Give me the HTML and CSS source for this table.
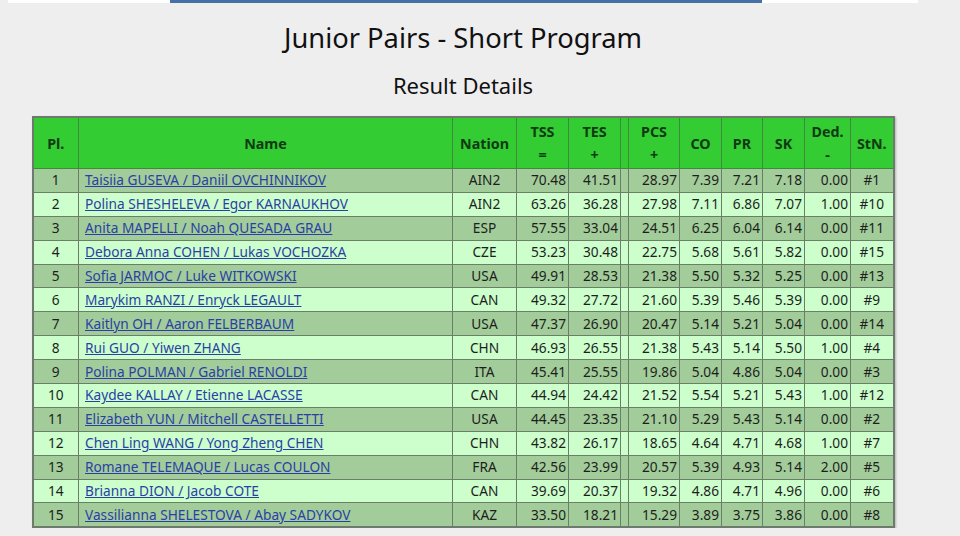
FILE: index.html
```html
<!DOCTYPE html>
<html>
<head>
<meta charset="utf-8">
<link rel="stylesheet" href="styles.css">
</head>
<body>
<div class="topbar"><div class="topbar-blue"></div></div>
<div class="wrap">
  <h1 class="title">Junior Pairs - Short Program</h1>
  <h2 class="subtitle">Result Details</h2>
  <table class="results">
    <colgroup>
      <col class="c-pl"><col class="c-name"><col class="c-nat"><col class="c-tss"><col class="c-tes"><col class="c-gap"><col class="c-pcs"><col class="c-co"><col class="c-pr"><col class="c-sk"><col class="c-ded"><col class="c-stn">
    </colgroup>
    <thead>
      <tr><th>Pl.</th><th>Name</th><th>Nation</th><th>TSS<br>=</th><th>TES<br>+</th><th></th><th>PCS<br>+</th><th>CO</th><th>PR</th><th>SK</th><th>Ded.<br>-</th><th>StN.</th></tr>
    </thead>
    <tbody>
      <tr class="odd"><td class="ctr">1</td><td class="name"><a href="#">Taisiia GUSEVA / Daniil OVCHINNIKOV</a></td><td class="ctr">AIN2</td><td>70.48</td><td>41.51</td><td></td><td>28.97</td><td>7.39</td><td>7.21</td><td>7.18</td><td>0.00</td><td class="ctr">#1</td></tr>
      <tr class="even"><td class="ctr">2</td><td class="name"><a href="#">Polina SHESHELEVA / Egor KARNAUKHOV</a></td><td class="ctr">AIN2</td><td>63.26</td><td>36.28</td><td></td><td>27.98</td><td>7.11</td><td>6.86</td><td>7.07</td><td>1.00</td><td class="ctr">#10</td></tr>
      <tr class="odd"><td class="ctr">3</td><td class="name"><a href="#">Anita MAPELLI / Noah QUESADA GRAU</a></td><td class="ctr">ESP</td><td>57.55</td><td>33.04</td><td></td><td>24.51</td><td>6.25</td><td>6.04</td><td>6.14</td><td>0.00</td><td class="ctr">#11</td></tr>
      <tr class="even"><td class="ctr">4</td><td class="name"><a href="#">Debora Anna COHEN / Lukas VOCHOZKA</a></td><td class="ctr">CZE</td><td>53.23</td><td>30.48</td><td></td><td>22.75</td><td>5.68</td><td>5.61</td><td>5.82</td><td>0.00</td><td class="ctr">#15</td></tr>
      <tr class="odd"><td class="ctr">5</td><td class="name"><a href="#">Sofia JARMOC / Luke WITKOWSKI</a></td><td class="ctr">USA</td><td>49.91</td><td>28.53</td><td></td><td>21.38</td><td>5.50</td><td>5.32</td><td>5.25</td><td>0.00</td><td class="ctr">#13</td></tr>
      <tr class="even"><td class="ctr">6</td><td class="name"><a href="#">Marykim RANZI / Enryck LEGAULT</a></td><td class="ctr">CAN</td><td>49.32</td><td>27.72</td><td></td><td>21.60</td><td>5.39</td><td>5.46</td><td>5.39</td><td>0.00</td><td class="ctr">#9</td></tr>
      <tr class="odd"><td class="ctr">7</td><td class="name"><a href="#">Kaitlyn OH / Aaron FELBERBAUM</a></td><td class="ctr">USA</td><td>47.37</td><td>26.90</td><td></td><td>20.47</td><td>5.14</td><td>5.21</td><td>5.04</td><td>0.00</td><td class="ctr">#14</td></tr>
      <tr class="even"><td class="ctr">8</td><td class="name"><a href="#">Rui GUO / Yiwen ZHANG</a></td><td class="ctr">CHN</td><td>46.93</td><td>26.55</td><td></td><td>21.38</td><td>5.43</td><td>5.14</td><td>5.50</td><td>1.00</td><td class="ctr">#4</td></tr>
      <tr class="odd"><td class="ctr">9</td><td class="name"><a href="#">Polina POLMAN / Gabriel RENOLDI</a></td><td class="ctr">ITA</td><td>45.41</td><td>25.55</td><td></td><td>19.86</td><td>5.04</td><td>4.86</td><td>5.04</td><td>0.00</td><td class="ctr">#3</td></tr>
      <tr class="even"><td class="ctr">10</td><td class="name"><a href="#">Kaydee KALLAY / Etienne LACASSE</a></td><td class="ctr">CAN</td><td>44.94</td><td>24.42</td><td></td><td>21.52</td><td>5.54</td><td>5.21</td><td>5.43</td><td>1.00</td><td class="ctr">#12</td></tr>
      <tr class="odd"><td class="ctr">11</td><td class="name"><a href="#">Elizabeth YUN / Mitchell CASTELLETTI</a></td><td class="ctr">USA</td><td>44.45</td><td>23.35</td><td></td><td>21.10</td><td>5.29</td><td>5.43</td><td>5.14</td><td>0.00</td><td class="ctr">#2</td></tr>
      <tr class="even"><td class="ctr">12</td><td class="name"><a href="#">Chen Ling WANG / Yong Zheng CHEN</a></td><td class="ctr">CHN</td><td>43.82</td><td>26.17</td><td></td><td>18.65</td><td>4.64</td><td>4.71</td><td>4.68</td><td>1.00</td><td class="ctr">#7</td></tr>
      <tr class="odd"><td class="ctr">13</td><td class="name"><a href="#">Romane TELEMAQUE / Lucas COULON</a></td><td class="ctr">FRA</td><td>42.56</td><td>23.99</td><td></td><td>20.57</td><td>5.39</td><td>4.93</td><td>5.14</td><td>2.00</td><td class="ctr">#5</td></tr>
      <tr class="even"><td class="ctr">14</td><td class="name"><a href="#">Brianna DION / Jacob COTE</a></td><td class="ctr">CAN</td><td>39.69</td><td>20.37</td><td></td><td>19.32</td><td>4.86</td><td>4.71</td><td>4.96</td><td>0.00</td><td class="ctr">#6</td></tr>
      <tr class="odd"><td class="ctr">15</td><td class="name"><a href="#">Vassilianna SHELESTOVA / Abay SADYKOV</a></td><td class="ctr">KAZ</td><td>33.50</td><td>18.21</td><td></td><td>15.29</td><td>3.89</td><td>3.75</td><td>3.86</td><td>0.00</td><td class="ctr">#8</td></tr>
    </tbody>
  </table>
</div>
</body>
</html>
```
FILE: styles.css
```css
html, body {
  margin: 0;
  padding: 0;
  background: #eeeeee;
  font-family: "Noto Sans", "Open Sans", sans-serif;
  color: #1e1e1e;
}
.topbar {
  margin-left: 8px;
  width: 910px;
  height: 3px;
  background: #ffffff;
  display: flex;
}
.topbar-blue {
  margin-left: 162px;
  width: 592px;
  height: 3px;
  background: #4670a6;
}
.wrap {
  width: 862px;
  margin-left: 32px;
  display: flex;
  flex-direction: column;
  align-items: center;
}
.title {
  margin: 17px 0 0 0;
  font-size: 27.3px;
  font-weight: normal;
  line-height: 36px;
  color: #111;
}
.subtitle {
  margin: 14px 0 0 0;
  font-size: 22px;
  font-weight: normal;
  line-height: 30px;
  color: #111;
}
.results {
  margin-top: 16px;
  width: 862px;
  border-collapse: collapse;
  table-layout: fixed;
  border: 2px solid #6f7a6f;
  box-shadow: 1px 1px 2px rgba(0,0,0,0.25);
  font-size: 13.7px;
}
.c-pl { width: 46px; }
.c-name { width: 374px; }
.c-nat { width: 64px; }
.c-tss { width: 52px; }
.c-tes { width: 52px; }
.c-gap { width: 8px; }
.c-pcs { width: 51px; }
.c-co { width: 42px; }
.c-pr { width: 41px; }
.c-sk { width: 42px; }
.c-ded { width: 46px; }
.c-stn { width: 43px; }
.results th {
  background: #33cc33;
  color: #0f3a12;
  font-weight: bold;
  font-size: 14.3px;
  height: 50px;
  line-height: 23px;
  padding: 0;
  border: 1px solid #3f8a3f;
  text-align: center;
  vertical-align: middle;
}
.results td {
  height: 22.9px;
  padding: 0 2px 0 2px;
  border: 1px solid #6b7f68;
  text-align: right;
  line-height: 22px;
  white-space: nowrap;
  overflow: hidden;
}
.results td.ctr { text-align: center; }
.results td.name { text-align: left; padding-left: 6px; }
.results tr.odd td { background: #a2cc99; }
.results tr.even td { background: #ccffcc; }
.results a {
  color: #2b3fa6;
  text-decoration: underline;
}
```
